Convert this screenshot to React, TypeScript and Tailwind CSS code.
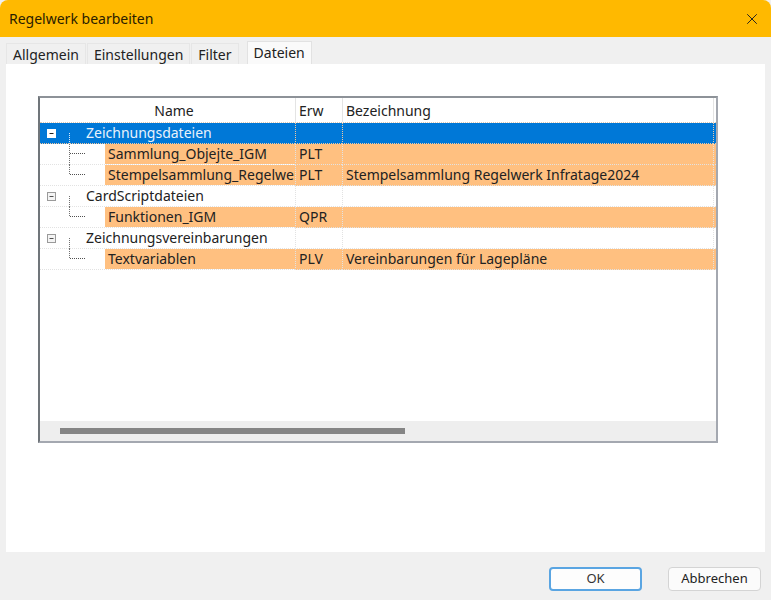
import { X } from "lucide-react";

type TreeKind = "parent" | "child" | "last";

interface Row {
  kind: TreeKind;
  name: string;
  ext?: string;
  desc?: string;
  selected?: boolean;
}

const rows: Row[] = [
  { kind: "parent", name: "Zeichnungsdateien", selected: true },
  { kind: "child", name: "Sammlung_Objejte_IGM", ext: "PLT" },
  { kind: "last", name: "Stempelsammlung_Regelwer", ext: "PLT", desc: "Stempelsammlung Regelwerk Infratage2024" },
  { kind: "parent", name: "CardScriptdateien" },
  { kind: "last", name: "Funktionen_IGM", ext: "QPR" },
  { kind: "parent", name: "Zeichnungsvereinbarungen" },
  { kind: "last", name: "Textvariablen", ext: "PLV", desc: "Vereinbarungen für Lagepläne" },
];

const TreeLines = ({ kind, selected }: { kind: TreeKind; selected?: boolean }) => {
  const line = selected ? "#dbe9f7" : "#707070";
  return (
    <svg width="65" height="21" className="shrink-0 block">
      {kind === "parent" && (
        <>
          <rect x="7.5" y="6.5" width="8" height="8" fill={selected ? "#ffffff" : "#f4f4f4"} stroke={selected ? "#ffffff" : "#9a9a9a"} />
          <path d="M9.5 10.5h4" stroke={selected ? "#202020" : "#505050"} />
          <path d="M29.5 10v11" stroke={line} strokeDasharray="1 1" />
        </>
      )}
      {kind !== "parent" && (
        <>
          <path d={kind === "child" ? "M29.5 0v21" : "M29.5 0v9"} stroke="#707070" strokeDasharray="1 1" />
          <path d="M30 9.5h15" stroke="#505050" strokeDasharray="1 1" />
        </>
      )}
    </svg>
  );
};

const TreeRow = ({ row }: { row: Row }) => {
  const isParent = row.kind === "parent";
  const bg = row.selected ? "bg-[#0078d7] text-[#e8f2fb]" : isParent ? "text-[#222]" : "bg-[#ffc080] text-[#222]";
  const rule = row.selected ? "border-dotted border-[#f0c8a0]" : "border-dotted border-[#e2e2e2]";
  return (
    <div className="flex h-[21px]">
      <div className={`flex w-[255px] h-[21px] border-b ${rule} ${row.selected ? "bg-[#0078d7]" : ""}`}>
        <TreeLines kind={row.kind} selected={row.selected} />
        {isParent ? (
          <span className={`-ml-[19px] leading-[20px] ${row.selected ? "text-[#e8f2fb]" : "text-[#222]"}`}>{row.name}</span>
        ) : (
          <span className="flex-1 bg-[#ffc080] pl-[3px] leading-[20px] text-[#222] whitespace-nowrap overflow-hidden">{row.name}</span>
        )}
      </div>
      <div className={`w-[47px] h-[21px] pl-[3px] leading-[20px] border-l border-b ${rule} ${isParent ? "" : bg} ${row.selected ? bg : ""}`}>{row.ext}</div>
      <div className={`w-[371px] h-[21px] pl-[3px] leading-[20px] border-l border-b ${rule} ${isParent ? "" : bg} ${row.selected ? bg : ""}`}>{row.desc}</div>
      <div className={`flex-1 h-[21px] border-l border-b ${rule} ${isParent ? "" : bg} ${row.selected ? bg : ""}`} />
    </div>
  );
};

const tabs = ["Allgemein", "Einstellungen", "Filter"];

export default function App() {
  return (
    <div className="w-[771px] h-[600px] flex flex-col overflow-hidden bg-[#f0f0f0] text-[14px] text-[#222] font-['Noto_Sans','Open_Sans',sans-serif]">
      <div className="flex items-center justify-between h-[37px] shrink-0 bg-[#ffb900] rounded-t-lg pl-[9px] pr-[10px]">
        <span className="text-[#2a2000]">Regelwerk bearbeiten</span>
        <X size={18} strokeWidth={1.3} className="text-[#222]" />
      </div>

      <div className="flex h-[27px] shrink-0 items-end pl-[6px] gap-[1px]">
        {tabs.map((t) => (
          <div key={t} className="h-[21px] px-[6px] leading-[21px] bg-[#f0f0f0] border-t border-x border-[#e6e6e6]">
            {t}
          </div>
        ))}
        <div className="h-[23px] ml-[7px] px-[6px] leading-[21px] bg-[#fafafa] border-t border-x border-[#e2e2e2]">Dateien</div>
      </div>

      <div className="flex-1 mx-[6px] bg-white pt-[32px] pl-[32px]">
        <div className="w-[680px] h-[347px] flex flex-col bg-white border-t-2 border-l-2 border-r-2 border-b-2 border-t-[#8d9298] border-l-[#70757a] border-r-[#a4a8b0] border-b-[#a4a8b0]">
          <div className="flex h-[24px] shrink-0">
            <div className="w-[255px] text-center pl-[13px] leading-[26px]">Name</div>
            <div className="w-[47px] pl-[3px] leading-[26px] border-l border-[#e4e4e4]">Erw</div>
            <div className="w-[371px] pl-[3px] leading-[26px] border-l border-[#e4e4e4]">Bezeichnung</div>
            <div className="flex-1 border-l border-[#e4e4e4]" />
          </div>
          <div className="flex-1 border-t border-dotted border-[#e0c8b0]">
            {rows.map((r) => (
              <TreeRow key={r.name} row={r} />
            ))}
          </div>
          <div className="h-[20px] shrink-0 flex items-center bg-[#eeeeee] pl-[20px]">
            <div className="w-[345px] h-[6px] bg-[#858585]" />
          </div>
        </div>
      </div>

      <div className="flex h-[48px] shrink-0 items-center justify-end gap-[26px] pr-[10px] pt-[6px]">
        <button className="w-[93px] h-[24px] rounded-[4px] bg-[#fdfdfd] border-2 border-[#5aa5e2] text-[13px] text-[#333]">OK</button>
        <button className="w-[93px] h-[24px] rounded-[4px] bg-[#fbfbfb] border border-[#d4d4d4] text-[13px] text-[#222]">Abbrechen</button>
      </div>
    </div>
  );
}
